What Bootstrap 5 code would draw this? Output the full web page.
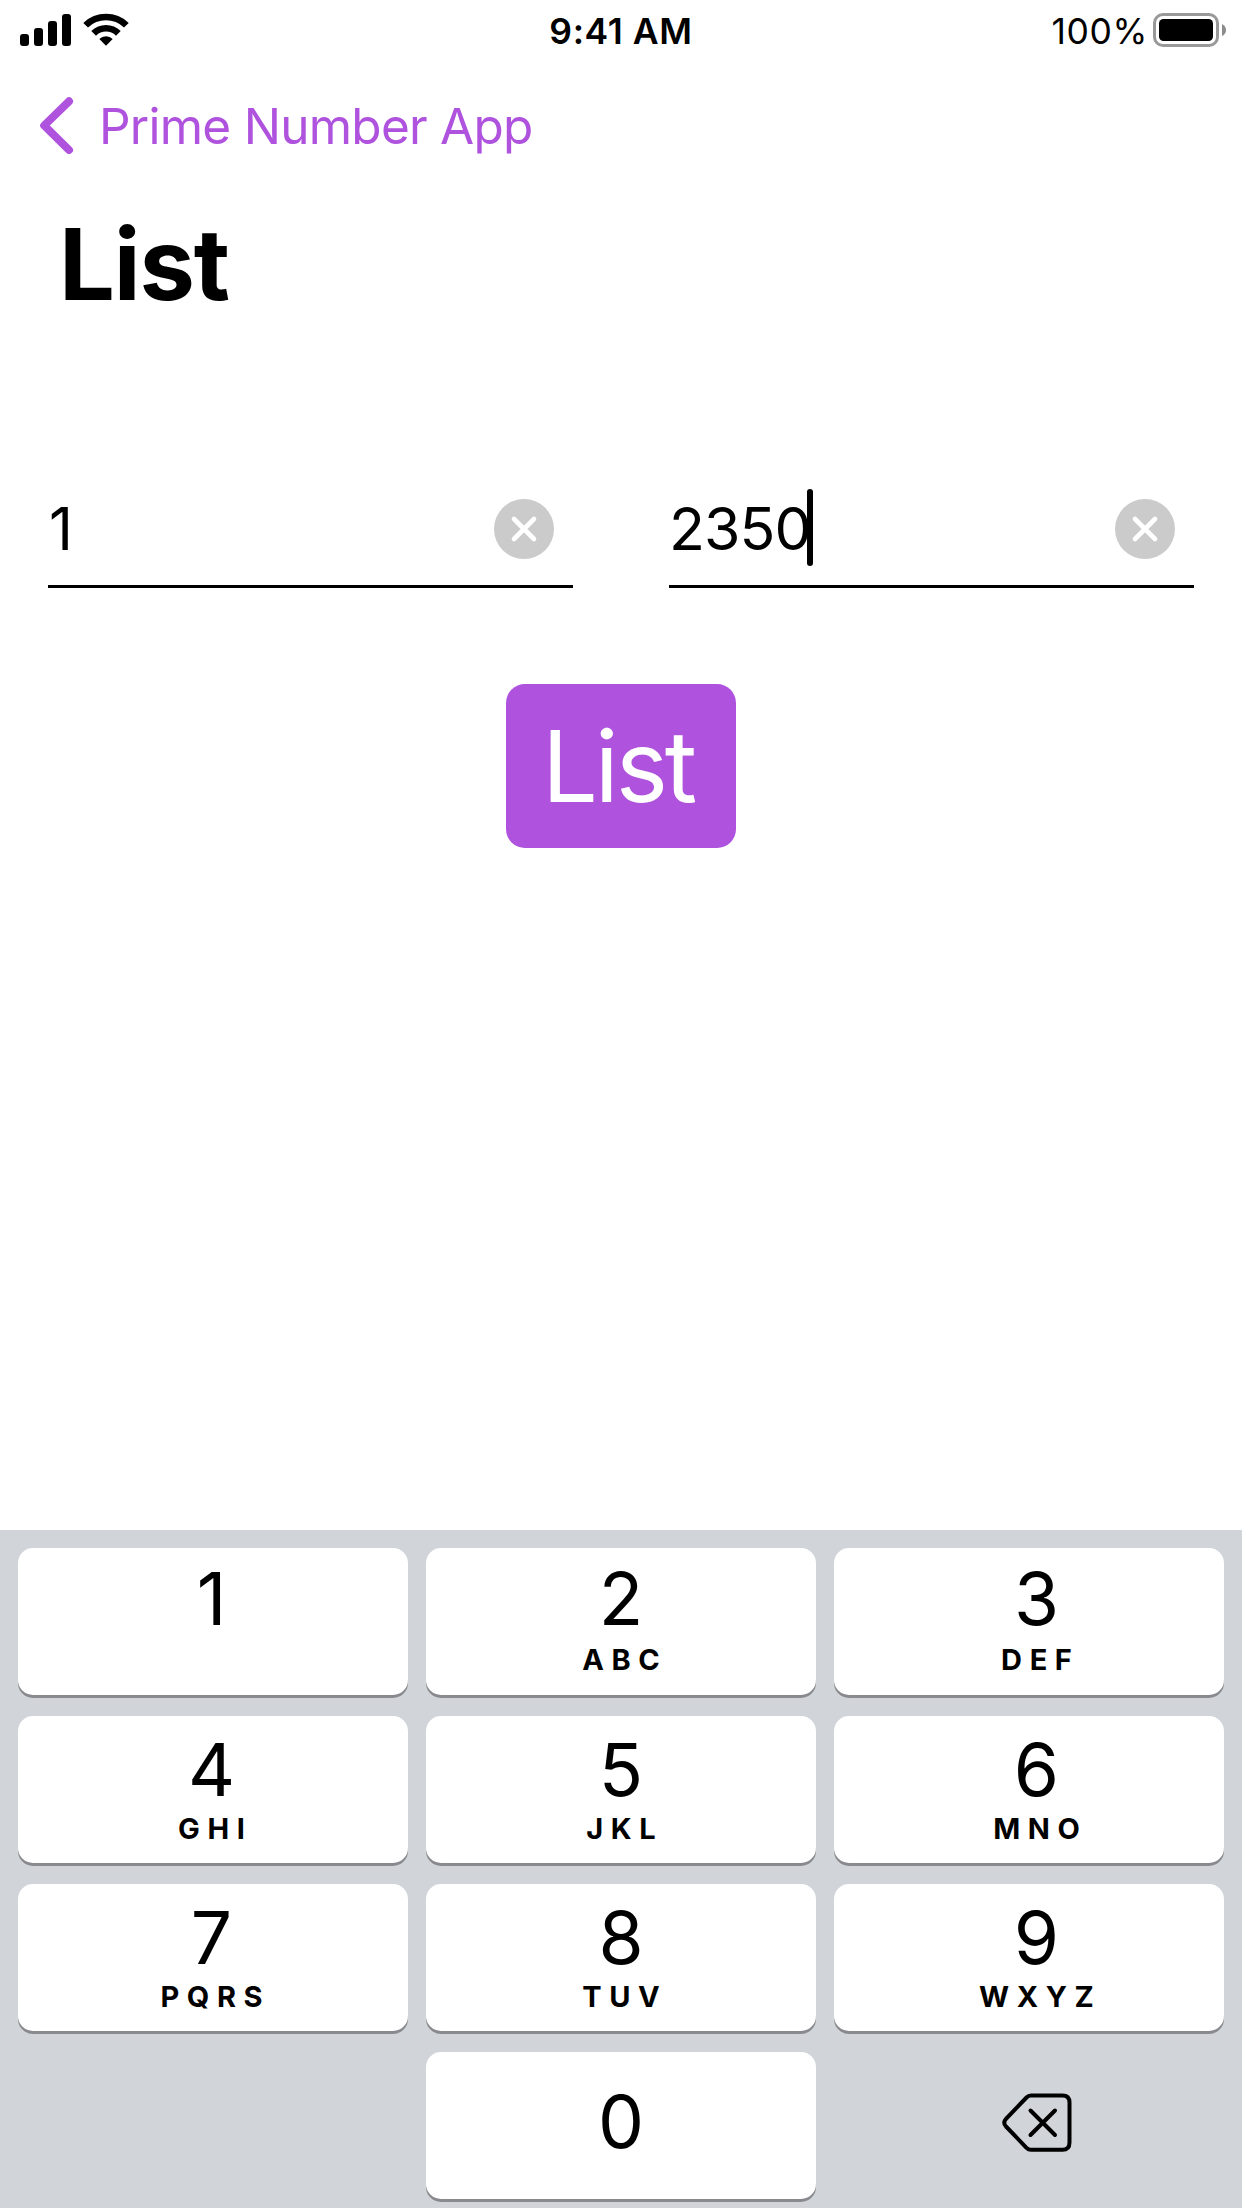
<!DOCTYPE html>
<html lang="en">
<head>
<meta charset="utf-8">
<meta name="viewport" content="width=device-width, initial-scale=1">
<title>Prime Number App</title>
<link href="https://cdn.jsdelivr.net/npm/bootstrap@5.3.0/dist/css/bootstrap.min.css" rel="stylesheet">
<style>
  :root { --accent: #af52de; }
  body { font-family: Inter, "Liberation Sans", sans-serif; color: #000; background: #fff; }
  svg { display: block; }
  .screen { width: 1242px; height: 2208px; }
  .status { height: 62px; font-size: 35.5px; line-height: 62px; letter-spacing: .6px; }
  .status-text { padding-top: 2px; }
  .status-side { flex: 1 1 0; }
  .percent { margin-right: -2px; }
  .topnav { height: 128px; padding: 0 0 0 38px; }
  .backlink { color: var(--accent); font-size: 49.5px; line-height: 60px; letter-spacing: -.75px; gap: 21px; }
  .page-title { margin: 14px 0 0 59px; font-size: 99px; line-height: 120px; font-weight: 700; letter-spacing: -1.2px; }
  .fields { margin-top: 144px; padding: 0 48px; gap: 96px; }
  .entry { height: 120px; border-bottom: 3px solid #000; padding: 5px 19px 0 0; font-size: 59px; letter-spacing: -.9px; line-height: 112px; }
  .entry span:first-child { padding-left: 1px; }
  .entry div span:first-child { padding-left: 0; }
  .caret { width: 5.5px; height: 77px; border-radius: 3px; background: #000; margin: 0 0 4px -3.5px; }
  .btn-list { --bs-btn-color: #fff; --bs-btn-bg: var(--accent); width: 230px; height: 164px; margin-top: 96px;
    border: 0; border-radius: 19px; padding: 1px 6px 0 0; font-size: 99px; line-height: 163px; letter-spacing: -3.2px; }
  .keypad { background: #d1d4d9; height: 678px; padding: 18px; }
  .keyrow { gap: 18px; margin-bottom: 21px; height: 147px; }
  .keycap { flex: none; width: 390px; border-radius: 15px; background: #fff; box-shadow: 0 3px 0 #898a8e; padding: 23.5px 0 0; }
  .keycap.blank { background: none; box-shadow: none; }
  .keycap:first-child { padding-right: 3px; }
  .keycap:last-child { padding-left: 15px; }
  .digit { font-size: 73px; line-height: 60px; }
  .letters { font-size: 29px; line-height: 30px; font-weight: 700; letter-spacing: 7.6px; margin: 14px -7.6px 0 0; }
  .keyrow:first-child .keycap { padding-top: 20.5px; }
  .keyrow:first-child .letters { margin-top: 16px; }
  .keyrow:last-child .keycap { padding-top: 40px; }
</style>
</head>
<body>
<div class="screen d-flex flex-column overflow-hidden">
  <header class="status d-flex align-items-center">
    <div class="status-side d-flex align-items-center">
      <svg width="140" height="62" viewBox="0 0 140 62">
        <rect x="20" y="34" width="9" height="12" rx="3"/>
        <rect x="34" y="28" width="9" height="18" rx="3"/>
        <rect x="48" y="21" width="9" height="25" rx="3"/>
        <rect x="62" y="14" width="9" height="32" rx="3"/>
        <path d="M83.300 23 A32.300 32.300 0 0 1 128.700 23 L124 27.600 A25.600 25.600 0 0 0 88 27.600 Z"/>
        <path d="M91.300 31 A20.800 20.800 0 0 1 120.700 31 L116 35.700 A14.300 14.300 0 0 0 96 35.700 Z"/>
        <path d="M99.300 39 A9.600 9.600 0 0 1 112.700 39 L106 45.800 Z"/>
      </svg>
    </div>
    <div class="status-text fw-semibold">9:41 AM</div>
    <div class="status-side d-flex align-items-center justify-content-end">
      <span class="status-text percent">100%</span>
      <svg width="96" height="62" viewBox="0 0 96 62">
        <rect x="8.500" y="14.500" width="63" height="31" rx="8.500" fill="none" stroke="#999" stroke-width="3"/>
        <rect x="13" y="19" width="54" height="22" rx="4.500"/>
        <path d="M76 24 Q80 26 80 30 Q80 34 76 36 Z" fill="#8c8c8c"/>
      </svg>
    </div>
  </header>

  <nav class="topnav d-flex align-items-center">
    <a class="backlink d-flex align-items-center text-decoration-none" href="#">
      <svg width="40" height="60" viewBox="0 0 40 60" fill="none" stroke="currentColor" stroke-width="8" stroke-linecap="round" stroke-linejoin="round">
        <path d="M31 5.300 L6.200 29.500 L31 54"/>
      </svg>
      <span>Prime Number App</span>
    </a>
  </nav>

  <h1 class="page-title">List</h1>

  <main class="flex-grow-1">
    <div class="fields d-flex">
      <div class="entry flex-fill d-flex align-items-center justify-content-between w-50">
        <span>1</span>
        <svg width="60" height="60" viewBox="0 0 60 60"><circle cx="30" cy="30" r="30" fill="#cbcbcb"/><path d="M20 20 L40 40 M40 20 L20 40" stroke="#fff" stroke-width="4.600" stroke-linecap="round"/></svg>
      </div>
      <div class="entry flex-fill d-flex align-items-center justify-content-between w-50">
        <div class="d-flex align-items-center"><span>2350</span><span class="caret"></span></div>
        <svg width="60" height="60" viewBox="0 0 60 60"><circle cx="30" cy="30" r="30" fill="#cbcbcb"/><path d="M20 20 L40 40 M40 20 L20 40" stroke="#fff" stroke-width="4.600" stroke-linecap="round"/></svg>
      </div>
    </div>
    <div class="d-flex justify-content-center">
      <button type="button" class="btn btn-list">List</button>
    </div>
  </main>

  <section class="keypad flex-shrink-0">
    <div class="keyrow d-flex text-center">
      <div class="keycap"><div class="digit">1</div></div>
      <div class="keycap"><div class="digit">2</div><div class="letters">ABC</div></div>
      <div class="keycap"><div class="digit">3</div><div class="letters">DEF</div></div>
    </div>
    <div class="keyrow d-flex text-center">
      <div class="keycap"><div class="digit">4</div><div class="letters">GHI</div></div>
      <div class="keycap"><div class="digit">5</div><div class="letters">JKL</div></div>
      <div class="keycap"><div class="digit">6</div><div class="letters">MNO</div></div>
    </div>
    <div class="keyrow d-flex text-center">
      <div class="keycap"><div class="digit">7</div><div class="letters">PQRS</div></div>
      <div class="keycap"><div class="digit">8</div><div class="letters">TUV</div></div>
      <div class="keycap"><div class="digit">9</div><div class="letters">WXYZ</div></div>
    </div>
    <div class="keyrow d-flex text-center">
      <div class="keycap blank"></div>
      <div class="keycap"><div class="digit">0</div></div>
      <div class="keycap blank d-flex justify-content-center">
        <svg width="70" height="62" viewBox="0 0 70 62" fill="none" stroke="#000" stroke-width="4" stroke-linecap="round" stroke-linejoin="round">
          <path d="M29 3.500 H60.500 Q67.500 3.500 67.500 10.500 V50.500 Q67.500 57.800 60.500 57.800 H29 Q26.500 57.800 24.500 55.800 L4 34.500 Q0.500 30.600 4 26.800 L24.500 5.500 Q26.500 3.500 29 3.500 Z"/>
          <path d="M28.500 18.500 L53 43 M53 18.500 L28.500 43"/>
        </svg>
      </div>
    </div>
  </section>
</div>
<script src="https://cdn.jsdelivr.net/npm/bootstrap@5.3.0/dist/js/bootstrap.bundle.min.js"></script>
</body>
</html>
